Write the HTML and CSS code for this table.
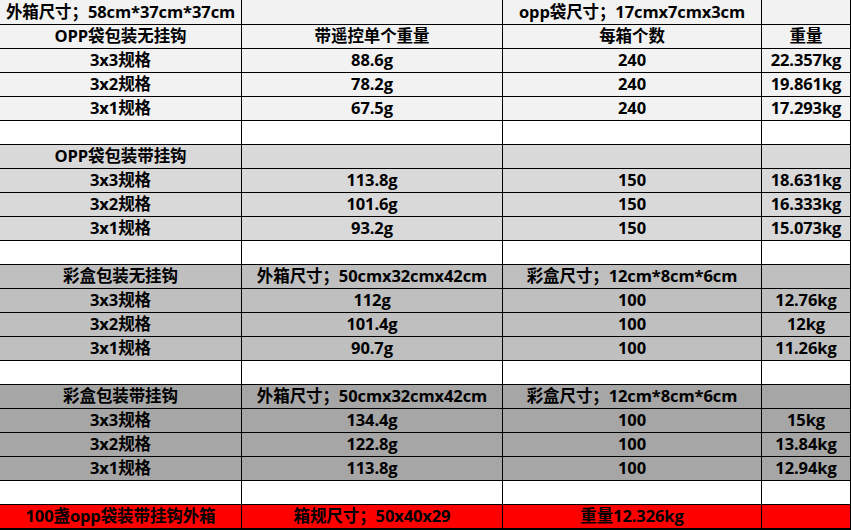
FILE: index.html
```html
<!DOCTYPE html>
<html lang="zh">
<head>
<meta charset="utf-8">
<title>包装规格</title>
<link rel="stylesheet" href="styles.css">
</head>
<body>
<div class="sheet">
  <div class="row r-first g1"><div class="c">外箱尺寸；58cm*37cm*37cm</div><div class="c"></div><div class="c">opp袋尺寸；17cmx7cmx3cm</div><div class="c"></div></div>
  <div class="row g1"><div class="c">OPP袋包装无挂钩</div><div class="c">带遥控单个重量</div><div class="c">每箱个数</div><div class="c">重量</div></div>
  <div class="row g1"><div class="c">3x3规格</div><div class="c">88.6g</div><div class="c">240</div><div class="c">22.357kg</div></div>
  <div class="row g1"><div class="c">3x2规格</div><div class="c">78.2g</div><div class="c">240</div><div class="c">19.861kg</div></div>
  <div class="row g1"><div class="c">3x1规格</div><div class="c">67.5g</div><div class="c">240</div><div class="c">17.293kg</div></div>
  <div class="row blank"><div class="c"></div><div class="c"></div><div class="c"></div><div class="c"></div></div>

  <div class="row g2"><div class="c">OPP袋包装带挂钩</div><div class="c"></div><div class="c"></div><div class="c"></div></div>
  <div class="row g2"><div class="c">3x3规格</div><div class="c">113.8g</div><div class="c">150</div><div class="c">18.631kg</div></div>
  <div class="row g2"><div class="c">3x2规格</div><div class="c">101.6g</div><div class="c">150</div><div class="c">16.333kg</div></div>
  <div class="row g2"><div class="c">3x1规格</div><div class="c">93.2g</div><div class="c">150</div><div class="c">15.073kg</div></div>
  <div class="row blank"><div class="c"></div><div class="c"></div><div class="c"></div><div class="c"></div></div>

  <div class="row g3"><div class="c">彩盒包装无挂钩</div><div class="c">外箱尺寸；50cmx32cmx42cm</div><div class="c">彩盒尺寸；12cm*8cm*6cm</div><div class="c"></div></div>
  <div class="row g3"><div class="c">3x3规格</div><div class="c">112g</div><div class="c">100</div><div class="c">12.76kg</div></div>
  <div class="row g3"><div class="c">3x2规格</div><div class="c">101.4g</div><div class="c">100</div><div class="c">12kg</div></div>
  <div class="row g3"><div class="c">3x1规格</div><div class="c">90.7g</div><div class="c">100</div><div class="c">11.26kg</div></div>
  <div class="row blank"><div class="c"></div><div class="c"></div><div class="c"></div><div class="c"></div></div>

  <div class="row g4"><div class="c">彩盒包装带挂钩</div><div class="c">外箱尺寸；50cmx32cmx42cm</div><div class="c">彩盒尺寸；12cm*8cm*6cm</div><div class="c"></div></div>
  <div class="row g4"><div class="c">3x3规格</div><div class="c">134.4g</div><div class="c">100</div><div class="c">15kg</div></div>
  <div class="row g4"><div class="c">3x2规格</div><div class="c">122.8g</div><div class="c">100</div><div class="c">13.84kg</div></div>
  <div class="row g4"><div class="c">3x1规格</div><div class="c">113.8g</div><div class="c">100</div><div class="c">12.94kg</div></div>
  <div class="row blank"><div class="c"></div><div class="c"></div><div class="c"></div><div class="c"></div></div>

  <div class="row red r-last"><div class="c">100盏opp袋装带挂钩外箱</div><div class="c">箱规尺寸；50x40x29</div><div class="c">重量12.326kg</div><div class="c"></div></div>
</div>
</body>
</html>
```

FILE: styles.css
```css
html, body {
  margin: 0;
  padding: 0;
  background: #ffffff;
}

.sheet {
  width: 851px;
  font-family: "Open Sans", "Noto Sans CJK SC", sans-serif;
  font-weight: 700;
  font-size: 16.5px;
  letter-spacing: -0.1px;
  color: #000;
}

.row {
  display: grid;
  grid-template-columns: 242px 261px 259px 89px;
  height: 24px;
}

.row.r-first {
  height: 25px;
}

.row.r-last {
  height: 25px;
}

.c {
  box-sizing: border-box;
  border-right: 1px solid #000;
  border-bottom: 1px solid #000;
  display: flex;
  align-items: center;
  justify-content: center;
  white-space: nowrap;
  overflow: hidden;
  line-height: 1;
}

.r-last .c {
  border-bottom-width: 2px;
}

.g1 { background: #f2f2f2; }
.g2 { background: #d9d9d9; }
.g3 { background: #bfbfbf; }
.g4 { background: #a6a6a6; }
.blank { background: #ffffff; }
.red { background: #ff0000; }
```
